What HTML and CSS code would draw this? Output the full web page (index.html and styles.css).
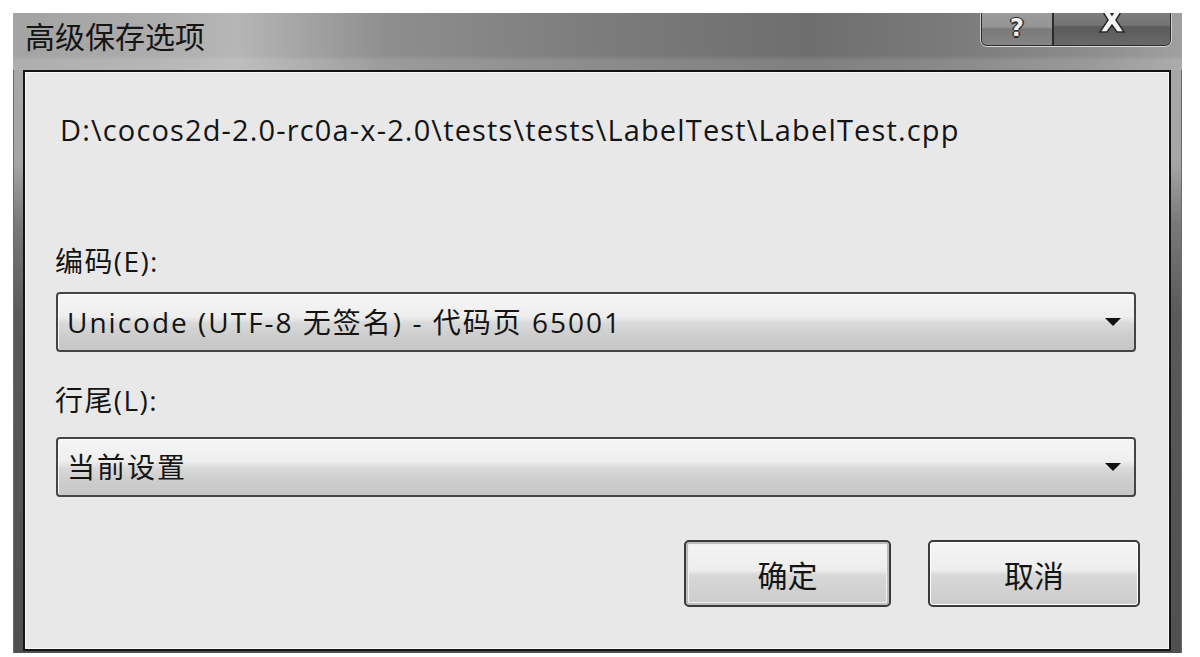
FILE: index.html
```html
<!DOCTYPE html>
<html lang="zh">
<head>
<meta charset="utf-8">
<title>高级保存选项</title>
<link rel="stylesheet" href="styles.css">
</head>
<body>
<div class="window">
  <div class="titlebar">
    <div class="title">高级保存选项</div>
    <div class="caption-btns">
      <div class="cbtn help"><span class="glyph">?</span></div>
      <div class="cbtn close">
        <svg class="xicon" width="30" height="26" viewBox="0 0 30 26"><path d="M3 -6 L10 -6 L15 2 L20 -6 L27 -6 L19 7 L27 19 L20 19 L15 12 L10 19 L3 19 L11 7 Z" fill="#f4f4f4" stroke="#2a2a2a" stroke-width="1.5"/></svg>
      </div>
    </div>
  </div>
  <div class="panel">
    <div class="path">D:\cocos2d-2.0-rc0a-x-2.0\tests\tests\LabelTest\LabelTest.cpp</div>
    <div class="label label-enc">编码(E):</div>
    <div class="combo">
      <span class="combo-text">Unicode (UTF-8 无签名) - 代码页 65001</span>
      <span class="arrow"></span>
    </div>
    <div class="label label-eol">行尾(L):</div>
    <div class="combo">
      <span class="combo-text">当前设置</span>
      <span class="arrow"></span>
    </div>
    <div class="buttons">
      <div class="btn btn-default">确定</div>
      <div class="btn btn-cancel">取消</div>
    </div>
  </div>
</div>
</body>
</html>
```

FILE: styles.css
```css
html, body {
  margin: 0;
  padding: 0;
  background: #ffffff;
}

body {
  width: 1200px;
  height: 657px;
  overflow: hidden;
  font-family: "Open Sans", "Noto Sans CJK SC", sans-serif;
  color: #141414;
}

.window {
  margin: 13px 0 0 13px;
  width: 1169px;
  height: 640px;
  box-sizing: border-box;
  display: flex;
  flex-direction: column;
  padding: 0 11px 2px 10px;
  background: linear-gradient(to bottom, #a9a9a9 0px, #a5a5a5 150px, #7a7a7a 210px, #5a5a5a 300px, #505050 640px);
  box-shadow: inset 1px 0 0 #6a6a6a, inset -1px 0 0 #6a6a6a;
}

.titlebar {
  height: 57px;
  margin: 0 -11px 0 -10px;
  padding: 0 11px 0 12px;
  display: flex;
  align-items: flex-start;
  background:
    linear-gradient(to bottom, rgba(255,255,255,0) 0px, rgba(255,255,255,0) 42px, rgba(255,255,255,0.12) 48px, rgba(255,255,255,0.12) 57px),
    linear-gradient(to right, #a3a3a3 0%, #acacac 12%, #b6b6b6 19%, #8e8e8e 32%, #7c7c7c 50%, #6e6e6e 68%, #7a7a7a 80%, #8c8c8c 92%, #a0a0a0 100%);
}

.title {
  font-family: "Noto Sans CJK SC", sans-serif;
  font-size: 30px;
  line-height: 44px;
  margin-top: 0;
  color: #151515;
}

.caption-btns {
  margin-left: auto;
  display: flex;
  height: 32px;
  border: 1px solid #2b2b2b;
  border-top: none;
  border-radius: 0 0 6px 6px;
  box-shadow: 0 1px 0 #d8d8d8, 1px 0 0 #cfcfcf, -1px 0 0 #cfcfcf;
  overflow: hidden;
}

.cbtn {
  position: relative;
  overflow: hidden;
  display: flex;
  justify-content: center;
}

.help {
  width: 70px;
  border-right: 2px solid #2b2b2b;
  background: linear-gradient(to bottom, #9c9c9c 0px, #959595 14px, #7a7a7a 16px, #858585 31px);
}

.close {
  width: 116px;
  background: linear-gradient(to bottom, #7d7d7d 0px, #747474 12px, #5a5a5a 14px, #686868 31px);
}

.glyph {
  font-family: "DejaVu Sans", sans-serif;
  font-weight: bold;
  font-size: 24px;
  line-height: 30px;
  margin-top: 0;
  color: #efefef;
  text-shadow: -1.5px 0 0 #2a2a2a, 1.5px 0 0 #2a2a2a, 0 1.5px 0 #2a2a2a, 0 -1.5px 0 #2a2a2a;
}

.xicon {
  display: block;
}

.panel {
  flex: 1;
  background: #e8e8e8;
  border: 2px solid #141414;
  box-shadow: inset 1px 1px 0 #f8f8f8, inset -1px -1px 0 #f8f8f8;
  display: flex;
  flex-direction: column;
  padding: 0 33px 0 31px;
}

.path {
  margin-top: 38px;
  margin-left: 4px;
  font-size: 29px;
  line-height: 40px;
  letter-spacing: 1.15px;
  white-space: nowrap;
}

.label {
  font-size: 28px;
  line-height: 36px;
  margin-left: -1px;
  letter-spacing: 1.4px;
}

.label-enc {
  margin-top: 93px;
}

.label-eol {
  margin-top: 30px;
}

.combo {
  height: 60px;
  box-sizing: border-box;
  border: 2px solid #444444;
  border-radius: 4px;
  margin-top: 13px;
  display: flex;
  align-items: center;
  padding: 0 13px 0 9px;
  background: linear-gradient(to bottom, #f6f6f6 0%, #eeeeee 40%, #d9d9d9 52%, #cdcdcd 75%, #c6c6c6 100%);
  box-shadow: inset 0 1px 0 #ffffff, inset 1px 0 0 #fafafa;
}

.label-eol + .combo {
  margin-top: 19px;
}

.combo-text {
  font-size: 28px;
  line-height: 36px;
  letter-spacing: 2px;
  white-space: nowrap;
  flex: 1;
}

.arrow {
  width: 0;
  height: 0;
  border-left: 8px solid transparent;
  border-right: 8px solid transparent;
  border-top: 8px solid #111111;
}

.buttons {
  margin-top: 43px;
  display: flex;
  justify-content: flex-end;
  gap: 37px;
  margin-right: -4px;
}

.btn {
  height: 67px;
  box-sizing: border-box;
  display: flex;
  align-items: center;
  justify-content: center;
  font-family: "Noto Sans CJK SC", sans-serif;
  font-size: 30px;
  border-radius: 5px;
  background: linear-gradient(to bottom, #f5f5f5 0%, #ededed 45%, #d8d8d8 52%, #cccccc 100%);
}

.btn-default {
  width: 207px;
  border: 2px solid #3a3a3a;
  box-shadow: inset 0 0 0 2px #bdbdbd, inset 0 0 0 3px #f0f0f0;
}

.btn-cancel {
  width: 212px;
  border: 2px solid #3a3a3a;
  box-shadow: inset 0 0 0 1px #ffffff;
}
```
